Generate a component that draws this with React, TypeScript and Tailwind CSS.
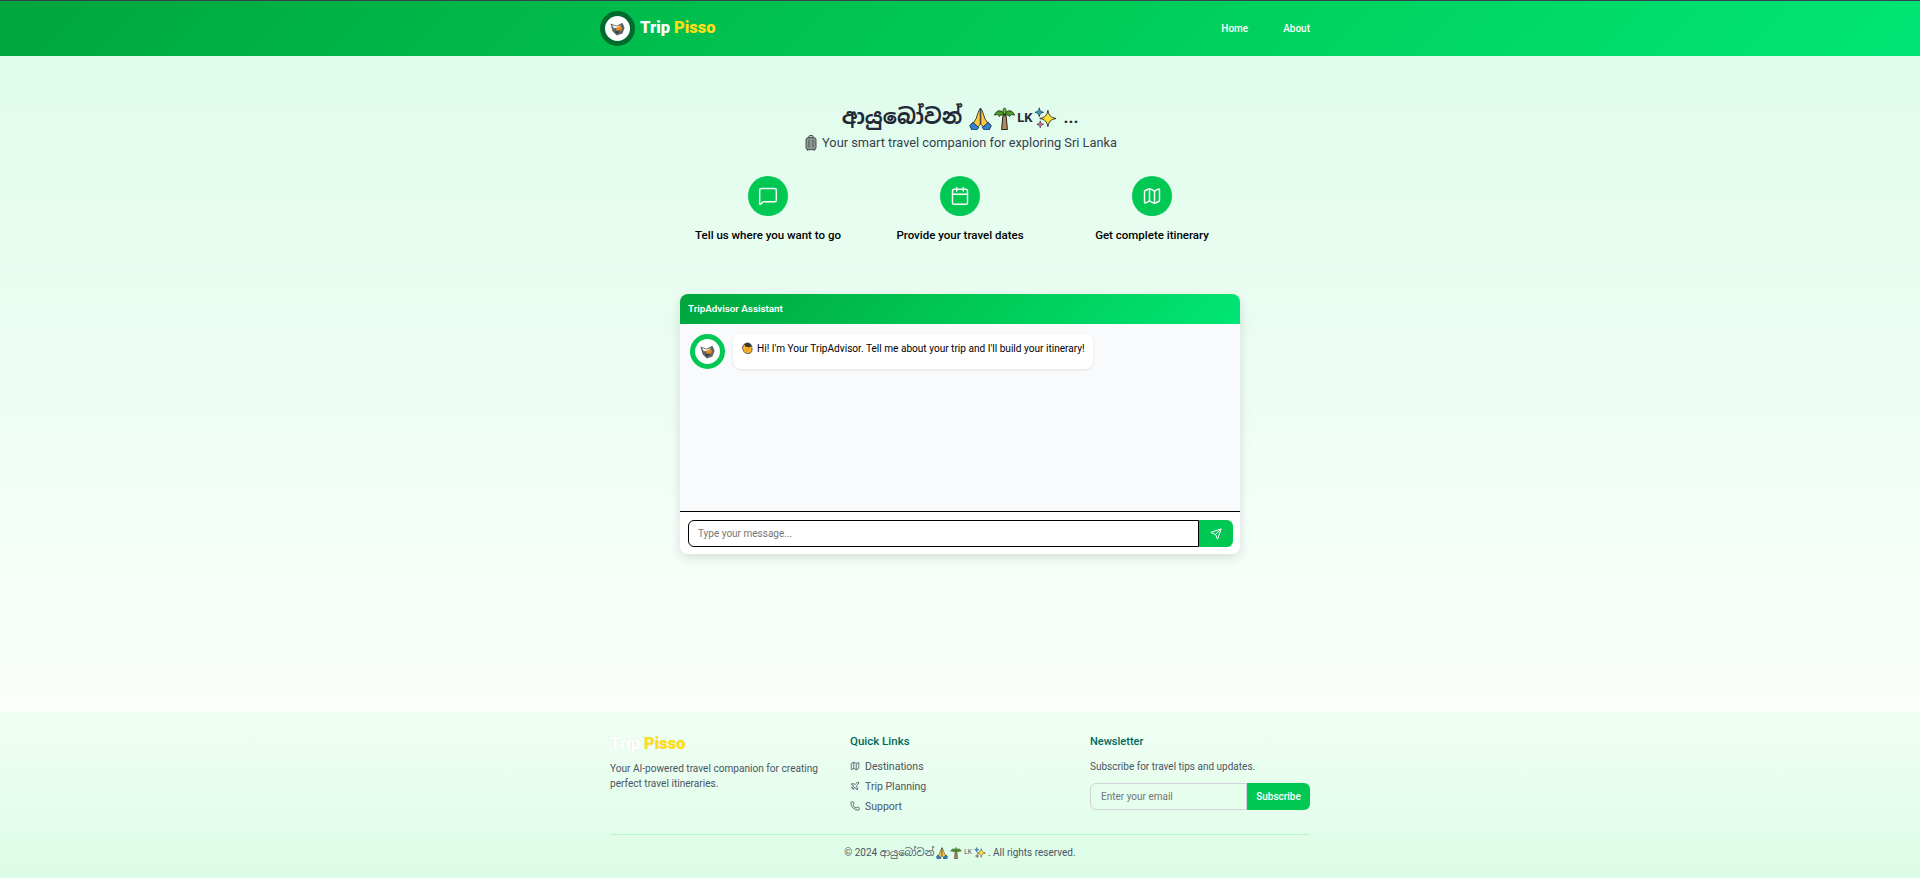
import { Calendar, Map, MessageSquare, Phone, Plane, Send } from "lucide-react";

const sans = "font-['Roboto','Noto_Sans_Sinhala','Noto_Sans',sans-serif]";

function Emoji({ kind, size }: { kind: "pray" | "palm" | "spark" | "case" | "wave"; size: number }) {
  const c = { width: size, height: size, viewBox: "0 0 24 24", className: "inline-block shrink-0" };
  if (kind === "pray")
    return (
      <svg {...c}>
        <path d="M11.700 1.500C9.500 4.500 8.500 9 7.500 12L4 17.500 8 22l3.700-4z" fill="#ffc83d" stroke="#1a2433" strokeWidth=".9" strokeLinejoin="round" />
        <path d="M12.300 1.500C14.500 4.500 15.500 9 16.500 12l3.500 5.500-4 4.500-3.700-4z" fill="#ffc83d" stroke="#1a2433" strokeWidth=".9" strokeLinejoin="round" />
        <path d="M.8 19.500 3.800 16l6.400 5.500-2.200 2.500H3z" fill="#2f84d6" stroke="#1a2433" strokeWidth=".9" strokeLinejoin="round" />
        <path d="M23.200 19.500 20.200 16l-6.400 5.500 2.200 2.500H21z" fill="#2f84d6" stroke="#1a2433" strokeWidth=".9" strokeLinejoin="round" />
      </svg>
    );
  if (kind === "palm")
    return (
      <svg {...c}>
        <path d="M10.300 9h3.400l1.300 14.500H9z" fill="#b08a5a" stroke="#1c1c1c" strokeWidth="1" strokeLinejoin="round" />
        <path d="M12 8C9 2.500 4 2.500 1.500 8.500c2.500-1 4.500-.8 5 1.500C8 8 10 8 12 8zM12 8c3-5.500 8-5.500 10.500.5-2.500-1-4.500-.8-5 1.500-1.500-2-3.500-2-5.500-2z" fill="#4c9a2a" stroke="#17320d" strokeWidth=".9" strokeLinejoin="round" />
        <path d="M12 8C10 5.500 9.500 3 12 .8 14.500 3 14 5.500 12 8z" fill="#69b53c" stroke="#17320d" strokeWidth=".8" />
      </svg>
    );
  if (kind === "spark")
    return (
      <svg {...c}>
        <path d="M14.500 3.500c.9 5.200 2.800 7.400 8.500 8.500-5.700 1.100-7.600 3.300-8.500 8.500-.9-5.200-2.800-7.400-8.500-8.500 5.700-1.100 7.600-3.300 8.500-8.500z" fill="#ffe135" stroke="#1c1c1c" strokeWidth=".9" strokeLinejoin="round" />
        <path d="M5.500.8c.4 3 1.400 4 4.500 4.700-3.100.7-4.100 1.700-4.500 4.700C5.100 7.200 4.100 6.200 1 5.500c3.100-.7 4.100-1.700 4.500-4.700z" fill="#2ea3d8" stroke="#1c1c1c" strokeWidth=".7" />
        <path d="M6.500 14.500c.3 2.300 1.100 3.100 3.500 3.600-2.400.5-3.200 1.300-3.500 3.600-.3-2.300-1.100-3.100-3.500-3.600 2.400-.5 3.200-1.300 3.500-3.600z" fill="#e768b2" stroke="#1c1c1c" strokeWidth=".7" />
      </svg>
    );
  if (kind === "case")
    return (
      <svg {...c}>
        <rect x="9" y="1" width="6" height="4" rx="1" fill="none" stroke="#2b2f31" strokeWidth="1.500" />
        <rect x="4.500" y="4" width="15" height="18" rx="3" fill="#8f9a96" stroke="#2b2f31" strokeWidth="1.200" />
        <path d="M9 7v12M15 7v12" stroke="#3c4245" strokeWidth="1.200" />
        <path d="M7 22v1.500M17 22v1.500" stroke="#2b2f31" strokeWidth="1.500" />
      </svg>
    );
  return (
    <svg {...c}>
      <path d="M3 13c0-6 4-11 10-11 5 0 9 4 9 9v5c0 4-3 7-8 7-5 0-8-2-9-6z" fill="#ffb52e" stroke="#1c1c1c" strokeWidth="1.300" />
      <path d="M7 5c4-5 12-3 14 3l-4 3-9-2z" fill="#33383a" />
      <path d="M8 15l5 4M11 12l6 5" stroke="#9a6512" strokeWidth="1" />
    </svg>
  );
}

function Logo({ size }: { size: number }) {
  return (
    <svg width={size} height={size} viewBox="0 0 24 24">
      <path d="M2 5l9 3 8-4 3 7-3 8-8 3-6-6z" fill="#5b6468" />
      <circle cx="14" cy="12" r="4" fill="#e98a1f" />
      <path d="M4 7l8 2 5-2-3 3-7 2z" fill="#f4f1e6" />
      <path d="M8 17l8-3-4 5z" fill="#2f3a3d" />
    </svg>
  );
}

function Step({ icon, label }: { icon: React.ReactNode; label: string }) {
  return (
    <div className="flex w-[192px] flex-col items-center">
      <div className="flex h-10 w-10 items-center justify-center rounded-full bg-[#00c853] text-white">{icon}</div>
      <p className="mt-[11px] text-[11.500px] leading-4 font-medium text-black">{label}</p>
    </div>
  );
}

function FootLink({ icon, label }: { icon: React.ReactNode; label: string }) {
  return (
    <li className="flex h-5 items-center gap-[5px] text-[10.500px] text-[#4b5563]">
      {icon}
      <span>{label}</span>
    </li>
  );
}

export default function App() {
  return (
    <div className={`${sans} flex min-h-[878px] flex-col`}>
      <header className="h-[56px] border-t border-[#374151] bg-[linear-gradient(135deg,#00a63e_0%,#00c853_50%,#00e676_100%)]">
        <div className="mx-auto flex h-[55px] w-[700px] items-center justify-between">
          <div className="-ml-[10px] flex items-center gap-[5px]">
            <div className="flex h-[35px] w-[35px] items-center justify-center rounded-full border-[5px] border-[#006b2d] bg-white">
              <Logo size={17} />
            </div>
            <span className="text-[16.500px] font-black text-white">
              Trip <span className="text-[#ffdd17]">Pisso</span>
            </span>
          </div>
          <nav className="flex items-center gap-[35px] text-[10px] font-medium text-white">
            <span>Home</span>
            <span>About</span>
          </nav>
        </div>
      </header>

      <main className="flex flex-1 flex-col items-center bg-gradient-to-b from-[#dffceb] to-[#fbfffc] pt-[49px]">
        <h1 className="flex h-[26px] items-center gap-[7px] text-[21px] font-bold text-[#1f2937]">
          <span>ආයුබෝවන්</span>
          <span className="flex items-center gap-[1px]">
            <Emoji kind="pray" size={23} />
            <Emoji kind="palm" size={23} />
            <span className="text-[13px]">LK</span>
            <Emoji kind="spark" size={23} />
          </span>
          <span className="text-[17px]">...</span>
        </h1>
        <p className="mt-[3px] flex h-[18px] items-center gap-[3px] text-[12.800px] text-[#374151]">
          <Emoji kind="case" size={16} />
          Your smart travel companion for exploring Sri Lanka
        </p>

        <div className="mt-[24px] flex">
          <Step icon={<MessageSquare size={20} strokeWidth={1.75} />} label="Tell us where you want to go" />
          <Step icon={<Calendar size={20} strokeWidth={1.75} />} label="Provide your travel dates" />
          <Step icon={<Map size={20} strokeWidth={1.75} />} label="Get complete itinerary" />
        </div>

        <section className="mt-[51px] w-[560px] overflow-hidden rounded-lg bg-white shadow-[0_4px_12px_rgba(0,0,0,0.12)]">
          <div className="flex h-[30px] items-center bg-[linear-gradient(135deg,#00a63e_0%,#00c853_50%,#00e676_100%)] px-2 text-[9.800px] font-semibold text-white">
            TripAdvisor Assistant
          </div>
          <div className="flex h-[187px] items-start gap-2 bg-[#f8fafc] p-[10px]">
            <div className="flex h-[35px] w-[35px] items-center justify-center rounded-full border-[5px] border-[#00c853] bg-white">
              <Logo size={17} />
            </div>
            <div className="flex h-[35px] items-start gap-[4px] rounded-lg bg-white px-2 pt-[8px] text-[10.100px] leading-[13px] text-black shadow-[0_1px_3px_rgba(0,0,0,0.1)]">
              <Emoji kind="wave" size={12} />
              Hi! I'm Your TripAdvisor. Tell me about your trip and I'll build your itinerary!
            </div>
          </div>
          <div className="flex h-[43px] items-start border-t border-black pt-2 pr-[7px] pl-2">
            <div className="flex h-[27px] flex-1 items-center rounded-l-md border border-black bg-white pl-[9px] text-[10px] text-[#757575]">
              Type your message...
            </div>
            <div className="flex h-[27px] w-[34px] items-center justify-center rounded-r-md bg-[#00c853] text-white">
              <Send size={12} />
            </div>
          </div>
        </section>
      </main>

      <footer className="h-[166px] bg-gradient-to-b from-[#f0fff4] to-[#dcfce7]">
        <div className="mx-auto w-[700px] pt-[21px]">
          <div className="grid h-[94px] grid-cols-3 gap-x-[20px] text-[10px] leading-[15px]">
            <div>
              <div className="mt-[3px] text-[16.500px] leading-[16px] font-black text-white [text-shadow:0_0_2px_rgba(0,0,0,0.08)]">
                Trip <span className="text-[#ffdd17]">Pisso</span>
              </div>
              <p className="mt-[9px] text-[10.100px] text-[#4b5563]">
                Your AI-powered travel companion for creating perfect travel itineraries.
              </p>
            </div>
            <div>
              <h3 className="mt-[1px] text-[11.500px] font-medium text-[#00695c]">Quick Links</h3>
              <ul className="mt-[7px]">
                <FootLink icon={<Map size={10} />} label="Destinations" />
                <FootLink icon={<Plane size={10} />} label="Trip Planning" />
                <FootLink icon={<Phone size={10} />} label="Support" />
              </ul>
            </div>
            <div>
              <h3 className="mt-[1px] text-[11px] font-medium text-[#00695c]">Newsletter</h3>
              <p className="mt-[10px] text-[#4b5563]">Subscribe for travel tips and updates.</p>
              <div className="mt-[9px] flex h-[27px]">
                <div className="flex flex-1 items-center rounded-l-md border border-[#d1d5db] pl-[10px] text-[#757575]">
                  Enter your email
                </div>
                <div className="flex w-[63px] items-center justify-center rounded-r-md bg-[#00c853] font-medium text-white">
                  Subscribe
                </div>
              </div>
            </div>
          </div>
          <div className="mt-[7px] flex h-[36px] items-center justify-center gap-[2px] border-t border-[#b9f6ca] text-[10px] text-[#4b5563]">
            <span>© 2024 ආයුබෝවන්</span>
            <Emoji kind="pray" size={12} />
            <Emoji kind="palm" size={12} />
            <span className="text-[6.500px]">LK</span>
            <Emoji kind="spark" size={12} />
            <span>. All rights reserved.</span>
          </div>
        </div>
      </footer>
    </div>
  );
}
